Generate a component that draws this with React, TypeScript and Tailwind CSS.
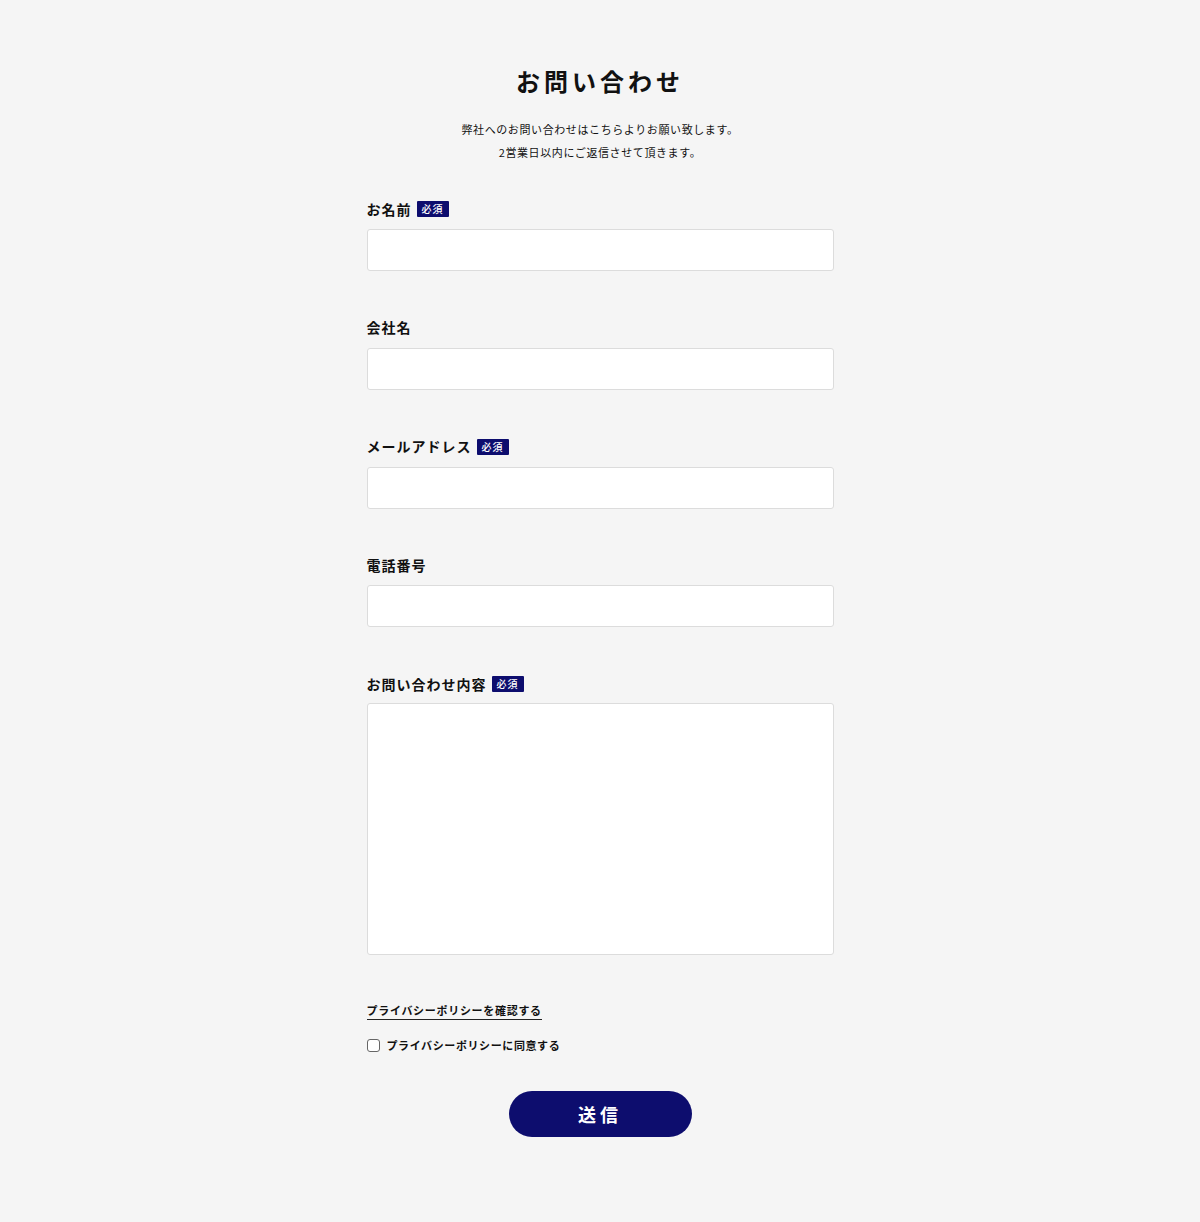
import { type ReactNode } from 'react';

const FONT = { fontFamily: '"Noto Sans CJK JP", "Noto Sans", sans-serif' };

function Badge() {
  return (
    <span className="ml-[5px] inline-flex h-[16px] w-[32px] items-center justify-center rounded-[1px] bg-[#0d0d6e] text-[10px] font-medium leading-none text-white">
      必須
    </span>
  );
}

interface FieldProps {
  label: string;
  required?: boolean;
  children: ReactNode;
}

function Field({ label, required, children }: FieldProps) {
  return (
    <div className="mb-[46.75px]">
      <label className="mb-[10px] flex h-[20px] items-center text-[14px] font-bold tracking-[1px] text-[#111]">
        {label}
        {required && <Badge />}
      </label>
      {children}
    </div>
  );
}

const inputCls =
  'block h-[42px] w-full rounded-[3px] border border-[#dcdcdc] bg-white px-3 text-[14px] outline-none';

export default function App() {
  return (
    <div className="min-h-[1222px] bg-[#f5f5f5] pt-[65px] pb-[85px]" style={FONT}>
      <div className="mx-auto w-[467px]">
        <h1 className="text-center text-[24px] font-bold leading-[32px] tracking-[4px] text-[#111]">
          お問い合わせ
        </h1>
        <p className="mt-[21px] text-center text-[11px] leading-[23px] tracking-[0.6px] text-[#111]">
          弊社へのお問い合わせはこちらよりお願い致します。
          <br />
          2営業日以内にご返信させて頂きます。
        </p>

        <form className="mt-[35px]" onSubmit={(e) => e.preventDefault()}>
          <Field label="お名前" required>
            <input type="text" className={inputCls} />
          </Field>
          <Field label="会社名">
            <input type="text" className={inputCls} />
          </Field>
          <Field label="メールアドレス" required>
            <input type="email" className={inputCls} />
          </Field>
          <Field label="電話番号">
            <input type="tel" className={inputCls} />
          </Field>
          <div className="mb-[41px]">
            <label className="mb-[9px] flex h-[20px] items-center text-[14px] font-bold tracking-[1px] text-[#111]">
              お問い合わせ内容
              <Badge />
            </label>
            <textarea className="block h-[252px] w-full resize-none rounded-[3px] border border-[#dcdcdc] bg-white p-3 text-[14px] outline-none" />
          </div>

          <a
            href="#"
            className="inline-block border-b-[1.5px] border-[#222] pb-[1px] text-[11px] font-bold leading-[16px] tracking-[0.7px] text-[#111]"
          >
            プライバシーポリシーを確認する
          </a>

          <label className="mt-[17px] flex items-center text-[11px] font-bold leading-[16px] tracking-[0.6px] text-[#111]">
            <span className="mr-[7px] inline-block h-[13px] w-[13px] rounded-[3px] border border-[#666] bg-white" />
            プライバシーポリシーに同意する
          </label>

          <div className="mt-[38px] flex justify-center">
            <button
              type="submit"
              className="h-[46px] w-[183px] rounded-full bg-[#0d0d6e] text-[18px] font-bold tracking-[4px] text-white"
            >
              送信
            </button>
          </div>
        </form>
      </div>
    </div>
  );
}
